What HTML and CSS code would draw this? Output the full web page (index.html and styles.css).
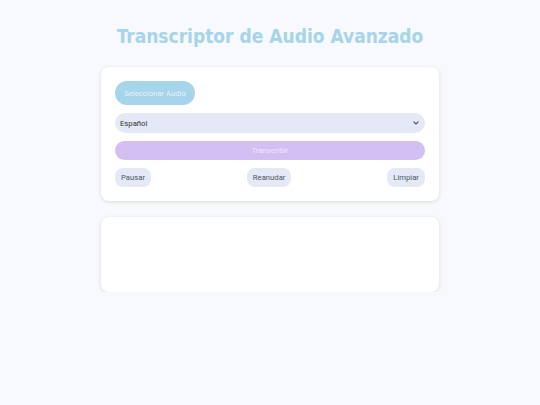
FILE: index.html
```html
<!DOCTYPE html>
<html lang="es">
<head>
<meta charset="utf-8">
<title>Transcriptor de Audio Avanzado</title>
<link rel="stylesheet" href="styles.css">
</head>
<body>
<div class="page">
  <h1 class="title">Transcriptor de Audio Avanzado</h1>
  <div class="card controls">
    <div class="row"><button class="btn btn-select">Seleccionar Audio</button></div>
    <div class="select-wrap">
      <select class="lang">
        <option>Español</option>
      </select>
      <svg class="chev" width="6" height="4" viewBox="0 0 6 4"><path d="M0.8 0.8 L3 3 L5.2 0.8" fill="none" stroke="#4a5568" stroke-width="1.1" stroke-linecap="round" stroke-linejoin="round"/></svg>
    </div>
    <button class="btn btn-transcribe">Transcribir</button>
    <div class="row actions">
      <button class="btn btn-small">Pausar</button>
      <button class="btn btn-small">Reanudar</button>
      <button class="btn btn-small">Limpiar</button>
    </div>
  </div>
  <div class="card output"></div>
</div>
</body>
</html>
```
FILE: styles.css
```css
* { box-sizing: border-box; }
html, body { margin: 0; padding: 0; }
body {
  background: #f7f9fc;
  font-family: "DejaVu Sans Condensed", "DejaVu Sans", sans-serif;
  font-stretch: condensed;
  color: #3a4a5c;
}
.page {
  width: 338px;
  margin: 0 auto;
  padding-top: 24px;
  display: flex;
  flex-direction: column;
}
.title {
  margin: 0 0 18px;
  text-align: center;
  font-size: 19px;
  font-weight: bold;
  color: #a6d4eb;
  line-height: 25px;
}
.card {
  background: #fff;
  border-radius: 8px;
  box-shadow: 0 1px 4px rgba(0,0,0,0.12);
}
.controls {
  padding: 14px;
  display: flex;
  flex-direction: column;
  gap: 8px;
}
.output {
  margin-top: 16px;
  height: 75px;
}
.row { display: flex; }
.actions { justify-content: space-between; }
.btn {
  border: none;
  font-family: Roboto, "Liberation Sans", sans-serif;
  font-stretch: normal;
  font-size: 7.7px;
  cursor: pointer;
  padding: 0;
}
.btn-select {
  background: #a6d4eb;
  color: #e4f2fa;
  height: 24px;
  width: 80px;
  border-radius: 12px;
}
.select-wrap {
  position: relative;
  display: flex;
}
.lang {
  flex: 1;
  appearance: none;
  -webkit-appearance: none;
  height: 20px;
  border: none;
  border-radius: 10px;
  background: #e4e9f5;
  font-family: Roboto, "Liberation Sans", sans-serif;
  font-stretch: normal;
  font-size: 7.7px;
  color: #333;
  padding: 0 5px;
  outline: none;
}
.chev {
  position: absolute;
  right: 6px;
  top: 8px;
  pointer-events: none;
}
.btn-transcribe {
  height: 19px;
  border-radius: 10px;
  background: #d4bff2;
  color: #efe7fb;
}
.btn-small {
  height: 19px;
  border-radius: 8px;
  background: #e4e9f5;
  color: #4a5568;
  padding: 0 6px;
}
```
